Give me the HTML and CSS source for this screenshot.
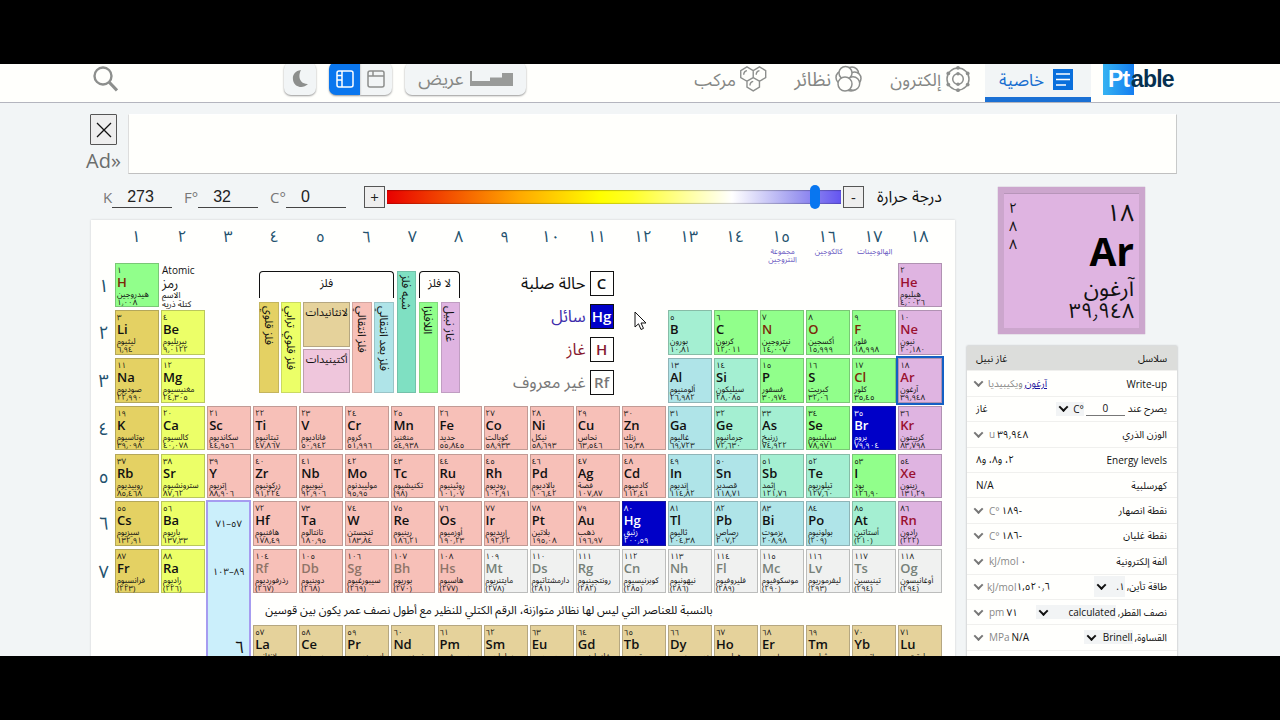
FILE: index.html
```html
<!DOCTYPE html>
<html lang="ar">
<head>
  <meta charset="UTF-8" />
  <meta name="viewport" content="width=device-width, initial-scale=1.0" />
  <title>Ptable</title>
  <link rel="stylesheet" href="styles.css">
</head>
<body>
  <div class="screen">
    <header class="topbar" dir="rtl">
      <div class="logo" dir="ltr"><b>Pt</b><span>able</span></div>
      <nav class="tabs">
        <a class="tab active">
          <svg width="22" height="22" viewBox="0 0 22 22"><rect x="1" y="0" width="20" height="21" fill="#0a6fdc"/><path d="M4 5h14M4 10.500h14M4 16h10" stroke="#fff" stroke-width="1.700"/></svg>
          <span>خاصية</span>
        </a>
        <a class="tab electrons">
          <svg width="26" height="28" viewBox="0 0 26 28" fill="none" stroke="#8d8f8d" stroke-width="1.500"><circle cx="13" cy="14" r="11"/><circle cx="13" cy="14" r="5.300"/><g fill="#8d8f8d" stroke="none"><circle cx="13" cy="2.800" r="1.900"/><circle cx="22.700" cy="8.400" r="1.900"/><circle cx="22.700" cy="19.600" r="1.900"/><circle cx="13" cy="25.200" r="1.900"/><circle cx="3.300" cy="19.600" r="1.900"/><circle cx="3.300" cy="8.400" r="1.900"/><circle cx="13" cy="8.700" r="1.800"/><circle cx="13" cy="19.300" r="1.800"/></g></svg>
          <span>إلكترون</span>
        </a>
        <a class="tab isotopes">
          <svg width="27" height="28" viewBox="0 0 27 28" fill="#fffffc" stroke="#8d8f8d" stroke-width="1.500"><circle cx="17" cy="8.500" r="6.500"/><circle cx="19.500" cy="13.500" r="6.500"/><circle cx="16" cy="19.500" r="6.500"/><circle cx="7.500" cy="12.500" r="6.500"/><circle cx="10.500" cy="8" r="6.500"/><circle cx="18" cy="18.500" r="6.700"/><circle cx="10" cy="19" r="7"/></svg>
          <span>نظائر</span>
        </a>
        <a class="tab compounds">
          <svg width="27" height="28" viewBox="0 0 29 28" fill="none" stroke="#8d8f8d" stroke-width="1.500"><path d="M7.500 1l6.700 3.900v7.600l-6.700 3.900-6.700-3.900V4.900zM20.900 1l6.700 3.900v7.600l-6.700 3.900-6.700-3.900V4.900zM14.200 12.500l6.700 3.900v6.400l-6.700 3.900-6.700-3.900v-6.400z"/><path d="M4 9.500c0-2.500 1-4 3.500-4.500M17.400 9.500c0-2.500 1-4 3.500-4.500M10.700 21c0-2.500 1-4 3.500-4.500"/></svg>
          <span>مركب</span>
        </a>
      </nav>
      <button class="tool wide"><svg width="43" height="15" viewBox="0 0 43 15"><path d="M0 0h2v10h18V6.500h12V2h11v13H0z" fill="#999b99"/></svg><span>عريض</span></button>
      <div class="layouts">
        <button class="tool"><svg width="18" height="18" viewBox="0 0 18 18" fill="none" stroke="#8d8f8d" stroke-width="1.500"><rect x="1" y="1" width="16" height="16" rx="2"/><path d="M1 6h16M6 1v5"/></svg></button>
        <button class="tool on"><svg width="18" height="18" viewBox="0 0 18 18" fill="none" stroke="#fff" stroke-width="1.500"><rect x="1" y="1" width="16" height="16" rx="2"/><path d="M6 1v16M1 5.500h5M1 10h5"/></svg></button>
      </div>
      <button class="tool moon"><svg width="17" height="18" viewBox="0 0 17 18"><path d="M9 0C2 1 0 6 1.200 11c1.500 6 9.500 8.500 14.800 3C9 14.500 5 8 9 0z" fill="#8d8f8d"/></svg></button>
      <svg class="search" width="25" height="26" viewBox="0 0 25 26" fill="none" stroke="#8d8f8d"><circle cx="10" cy="10" r="8.500" stroke-width="2.400"/><path d="M16 16l8 8.500" stroke-width="3.200"/></svg>
    </header>

    <section class="ad">
      <div class="ad-side">
        <button class="close"><svg width="16" height="16" viewBox="0 0 16 16"><path d="M1 1l14 14M15 1L1 15" stroke="#111" stroke-width="1.300"/></svg></button>
        <span>Ad»</span>
      </div>
      <div class="ad-box"></div>
    </section>

    <main class="content">
      <div class="left">
        <div class="temperature">
          <label class="unit kelvin">K <output>273</output></label>
          <label class="unit fahrenheit">F° <output>32</output></label>
          <label class="unit celsius">C° <output>0</output></label>
          <button class="step plus">+</button>
          <div class="slider"><i></i></div>
          <button class="step">-</button>
          <span class="temp-label">درجة حرارة</span>
        </div>

        <div class="table" id="table">
          <div class="key"><small>Atomic</small><b>رمز</b><span>الاسم</span><span>كتلة ذرية</span></div>

          <div class="series">
            <div class="bracket metals">فلز</div>
            <div class="bracket nonmetals">لا فلز</div>
            <div class="s alkali">فلز قلوي</div>
            <div class="s alkaline">فلز قلوي ترابي</div>
            <div class="inner">
              <div class="lanthanoid">لانثانيدات</div>
              <div class="actinoid">أكتينيدات</div>
            </div>
            <div class="s transition">فلز انتقالي</div>
            <div class="s post">فلز بعد انتقالي</div>
            <div class="s metalloid tall">شبه فلز</div>
            <div class="s nonmetal">اللافلزا</div>
            <div class="s noble">غاز نبيل</div>
          </div>

          <div class="states">
            <div><span>حالة صلبة</span><b>C</b></div>
            <div class="is-liquid"><span>سائل</span><b>Hg</b></div>
            <div class="is-gas"><span>غاز</span><b>H</b></div>
            <div class="is-unknown"><span>غير معروف</span><b>Rf</b></div>
          </div>

          <div class="inner-range"><span>٥٧–٧١</span><span>٨٩–١٠٣</span><em>٦</em></div>
          <p class="note" dir="rtl">بالنسبة للعناصر التي ليس لها نظائر متوازنة، الرقم الكتلي للنظير مع أطول نصف عمر يكون بين قوسين</p>
        </div>
      </div>

      <aside class="right" dir="rtl">
        <div class="card">
          <div class="card-main"><span>١٨</span><b>Ar</b><span class="card-name">آرغون</span><span class="card-mass">٣٩٫٩٤٨</span></div>
          <div class="shells"><span>٢</span><span>٨</span><span>٨</span></div>
        </div>
        <dl class="props">
          <div class="head"><dt>سلاسل</dt><dd>غاز نبيل</dd></div>
          <div><dt>Write-up</dt><dd class="more"><u>آرغون</u> <i>ويكيبيديا</i></dd></div>
          <div><dt>يصرح عند <output>0</output><span class="select"><bdo dir="ltr">C°</bdo></span></dt><dd>غاز</dd></div>
          <div><dt>الوزن الذري</dt><dd class="more" dir="ltr"><i>u</i> ٣٩٫٩٤٨</dd></div>
          <div><dt>Energy levels</dt><dd>٢، و٨، و٨</dd></div>
          <div><dt>كهرسلبية</dt><dd>N/A</dd></div>
          <div><dt>نقطة انصهار</dt><dd class="more" dir="ltr"><i>C°</i> <bdo dir="ltr">١٨٩-</bdo></dd></div>
          <div><dt>نقطة غليان</dt><dd class="more" dir="ltr"><i>C°</i> <bdo dir="ltr">١٨٦-</bdo></dd></div>
          <div><dt>ألفة إلكترونية</dt><dd class="more" dir="ltr"><i>kJ/mol</i> ٠</dd></div>
          <div><dt>طاقة تأين, <span class="select s-ion">١.</span></dt><dd class="more tight" dir="ltr"><i>kJ/mol</i> ١,٥٢٠٫٦</dd></div>
          <div><dt>نصف القطر, <span class="select s-radius">calculated</span></dt><dd class="more" dir="ltr"><i>pm</i> ٧١</dd></div>
          <div><dt>القساوة, <span class="select s-hard">Brinell</span></dt><dd class="more" dir="ltr"><i>MPa</i> N/A</dd></div>
        </dl>
      </aside>
    </main>

    <svg class="cursor" width="13" height="20" viewBox="0 0 13 20"><path d="M1 1v15l3.500-3.200L7 18.500l2.500-1.100L7 12h5z" fill="#fff" stroke="#111"/></svg>
  </div>
  <script src="script.js"></script>
</body>
</html>
```
FILE: styles.css
```css
* {
  box-sizing: border-box;
}
html, body {
  margin: 0;
  height: 100%;
  overflow: hidden;
  background: #000;
}
body {
  padding: 64px 0;
  color: #111;
  font-family: "Open Sans", "Noto Sans Arabic", "DejaVu Sans Condensed", "DejaVu Sans", sans-serif;
}
button {
  font-family: inherit;
  padding: 0;
  color: #222;
}
svg {
  flex: none;
  display: block;
}
.screen {
  position: relative;
  height: 592px;
  overflow: hidden;
  background: #f2f5f6;
}

/* top bar */
.topbar {
  display: flex;
  height: 39px;
  padding: 0 103px 0 93px;
  background: #fffffc;
  border-bottom: 1px solid #b4b5be;
}
.logo {
  display: flex;
  width: 74px;
  height: 31px;
  font: bold 23px/31px "Liberation Sans", sans-serif;
  letter-spacing: -.8px;
  color: #06304f;
}
.logo b {
  width: 31px;
  padding-left: 5px;
  color: #fff;
  background: linear-gradient(90deg, #36b3f2, #147df0);
}
.logo span {
  margin-left: -3px;
}
.tabs {
  display: flex;
  margin-right: 12px;
  width: 404px;
}
.tab {
  display: flex;
  gap: 4px;
  height: 38px;
  padding-right: 14px;
  color: #858785;
  font-size: 17.500px;
  line-height: 31px;
  white-space: nowrap;
}
.tab svg {
  margin-top: 1px;
}
.tab.active {
  width: 106px;
  padding-right: 17px;
  gap: 8px;
  font-size: 17px;
  color: #1a6fd0;
  background: #f2f5f6;
  border-bottom: 5px solid #1a70d4;
}
.tab.active svg {
  margin-top: 5px;
}
.electrons { width: 108px; }
.isotopes {
  width: 97px;
  padding-right: 15px;
  font-size: 19px;
}
.compounds { width: 93px; padding-right: 13px; }
.tool {
  display: flex;
  align-items: center;
  justify-content: center;
  height: 33px;
  margin-top: -2px;
  border: 0;
  background: #f2f5f6;
  border-radius: 7px;
  box-shadow: 0 1px 2px #999;
}
.wide {
  width: 121px;
  margin-right: 161px;
  gap: 6px;
  font-size: 18px;
  color: #858785;
}
.layouts {
  display: flex;
  margin-right: 13px;
}
.layouts .tool {
  width: 32px;
  border-radius: 0 7px 7px 0;
}
.layouts .on {
  width: 31px;
  background: #0a76ee;
  border-radius: 7px 0 0 7px;
}
.moon {
  width: 32px;
  margin-right: 13px;
}
.search {
  margin: 2px auto 0 0;
}

/* ad strip */
.ad {
  display: flex;
  height: 71px;
  padding: 11px 103px 0 86px;
}
.ad-side {
  width: 42px;
  font-size: 20px;
  line-height: 31px;
  color: #6b6d6d;
}
.close {
  display: flex;
  align-items: center;
  justify-content: center;
  width: 27px;
  height: 31px;
  margin-left: 4px;
  background: #eee;
  border: 1px solid #555;
  border-radius: 1px;
}
.ad-box {
  flex: 1;
  height: 60px;
  background: #fffffc;
  border: 1px solid #fff;
  border-color: #fff #c8caca #c0c0c0 #ddd;
}

.content {
  display: flex;
  padding-left: 91px;
}
.left {
  width: 864px;
}

/* temperature */
.temperature {
  display: flex;
  align-items: center;
  height: 46px;
  padding-left: 12px;
}
.unit {
  display: flex;
  justify-content: space-between;
  font-size: 15px;
  line-height: 22px;
  color: #777;
}
.kelvin { width: 69px; }
.fahrenheit {
  width: 74px;
  margin-left: 12px;
}
.celsius {
  width: 76px;
  margin-left: 12px;
}
.unit output {
  width: 60px;
  height: 22px;
  padding-left: 15px;
  font: 16px/22px "Liberation Sans", sans-serif;
  color: #222;
  border-bottom: 1px solid #444;
}
.step {
  width: 21px;
  height: 22px;
  font-size: 15px;
  line-height: 18px;
  background: #eee;
  border: 1px solid #555;
  border-radius: 0;
}
.plus {
  margin-left: 18px;
}
.slider {
  width: 454px;
  height: 14px;
  margin: 0 2px;
  display: flex;
  align-items: center;
  background: linear-gradient(90deg, #e80000, #ffa800 29%, #ffff00 47%, #ffff28 54%, #fff 76%, #a09cf0 90%, #6455f0);
  box-shadow: inset 0 1px 1px rgba(0, 0, 0, .25), inset 0 -1px 1px rgba(0, 0, 0, .2);
}
.slider i {
  width: 10px;
  height: 24px;
  margin-left: 423px;
  background: #0876f0;
  border-radius: 5px;
}
.temp-label {
  margin-left: auto;
  margin-right: 13px;
  font-size: 16px;
  white-space: nowrap;
}

/* periodic table */
.table {
  display: grid;
  grid-template-columns: 21.900px repeat(18, 44px);
  grid-template-rows: 39.600px repeat(7, 44.500px) 25.100px 44.500px;
  gap: 3.200px 2.080px;
  height: 450px;
  background: #fffffd;
  box-shadow: 0 0 2px #ccc;
}
.group {
  grid-row: 1;
  margin-left: -2px;
  padding-top: 5px;
  text-align: center;
  font-size: 16px;
  line-height: 23px;
  color: #23516d;
}
.group small {
  display: block;
  margin: -1px -4px 0 -1px;
  font-size: 7.600px;
  line-height: 8px;
  color: #6353c0;
}
.period {
  grid-column: 1;
  padding-right: 4px;
  text-align: right;
  font-size: 18px;
  line-height: 44px;
  color: #23516d;
}
.el {
  display: flex;
  flex-direction: column;
  padding-left: 1px;
  border: 1px solid rgba(70, 70, 70, .3);
  white-space: nowrap;
  font-size: 8px;
  line-height: 11px;
}
.el b {
  font-size: 13px;
  font-weight: 600;
  line-height: 15px;
}
.el span {
  font-size: 8px;
  line-height: 8px;
}
.el .mass {
  font-size: 8px;
  line-height: 8px;
}
.alkali { background: #e4d163; }
.alkaline { background: #ecff68; }
.transition { background: #f7c0b8; }
.post { background: #afe4e8; }
.metalloid { background: #a4efd2; }
.nonmetal { background: #91ff8b; }
.noble { background: #dfb4e1; }
.unknown { background: #f0f1f0; }
.lanthanoid { background: #e5d29b; }
.actinoid { background: #efc6dc; }
.gas b { color: #9a1030; }
.nonmetal.gas b { color: #7c2a08; }
.synthetic b { color: #8f7468; }
.unknown b { color: #768078; }
.liquid {
  color: #fff;
  background: #0000c8;
}
.selected {
  outline: 2px solid #145fc4;
}

.key {
  grid-area: 2 / 3;
  display: flex;
  flex-direction: column;
  align-items: flex-start;
  padding: 1px 0 0 1px;
  font-size: 8.500px;
  line-height: 9px;
  white-space: nowrap;
}
.key small {
  font-size: 10px;
  line-height: 12px;
}
.key b {
  font-size: 13px;
  font-weight: normal;
  line-height: 14px;
}

/* legend */
.series {
  grid-area: 2 / 5 / 5 / 10;
  display: grid;
  grid-template-columns: 19.600px 19.600px 46.500px 19.600px 19.600px 19.600px 19.600px 19.600px;
  grid-template-rows: 29px 91px;
  gap: 2.500px;
  padding: 8px 0 0 6px;
  font-size: 11.500px;
  white-space: nowrap;
}
.bracket {
  margin-bottom: 2px;
  border: 1px solid #111;
  border-bottom: 0;
  border-radius: 4px 4px 0 0;
  text-align: center;
  line-height: 21px;
}
.metals { grid-column: 1 / 6; }
.nonmetals { grid-column: 7 / 9; }
.s {
  grid-row: 2;
  writing-mode: vertical-rl;
  padding-top: 3px;
  line-height: 18px;
  border: 1px solid rgba(70, 70, 70, .2);
}
.s.tall {
  grid-row: 1 / 3;
  background: #7fe0c2;
}
.inner {
  grid-row: 2;
  display: grid;
  gap: 2px;
  text-align: center;
  font-size: 10.800px;
  line-height: 18px;
}
.inner div {
  border: 1px solid rgba(70, 70, 70, .3);
}
.states {
  grid-area: 2 / 10 / 5 / 13;
  width: 130px;
  display: flex;
  flex-direction: column;
  gap: 8px;
  padding-top: 8px;
  font-size: 16.500px;
  white-space: nowrap;
}
.states div {
  display: flex;
  justify-content: flex-end;
  align-items: center;
  gap: 4px;
  height: 25px;
}
.states b {
  width: 24px;
  height: 25px;
  border: 1.500px solid #111;
  text-align: center;
  font-size: 15px;
  font-weight: 600;
  line-height: 22px;
}
.is-liquid { color: #3d2cab; }
.is-liquid b {
  color: #fff;
  background: #0000c8;
}
.is-gas { color: #86182f; }
.is-unknown { color: #777; }
.inner-range {
  grid-area: 7 / 4 / 11 / 5;
  display: flex;
  flex-direction: column;
  margin: -1px 0 0 -1px;
  background: #cbeffb;
  border: 2px solid #a69cf0;
  font-size: 9.500px;
  text-align: center;
}
.inner-range span {
  height: 47.700px;
  line-height: 44px;
  unicode-bidi: isolate;
  direction: rtl;
}
.inner-range em {
  margin: 34px 5px 0;
  text-align: right;
  font-style: normal;
  font-size: 17px;
  line-height: 30px;
}
.note {
  grid-area: 9 / 5 / 10 / 16;
  margin: 0;
  padding-left: 12px;
  justify-self: start;
  font-size: 11.400px;
  line-height: 25px;
  white-space: nowrap;
}

/* selected element */
.right {
  width: 210px;
  margin-left: 12px;
  padding-top: 13px;
}
.card {
  display: flex;
  justify-content: space-between;
  width: 147px;
  height: 147px;
  margin: 0 32px 0 0;
  padding: 7px 5px;
  border: 6px solid #cca6cd;
  background: #dfb4e1;
  box-shadow: inset 0 1px 0 #b795b9, 0 0 1px #a98aaa;
}
.card-main {
  display: flex;
  flex-direction: column;
  align-items: flex-start;
  font-size: 24px;
  line-height: 24px;
}
.card-main b {
  margin: 7px 0 4px;
  font-size: 39px;
  line-height: 40px;
  color: #000;
}
.card-name {
  font-size: 22.500px;
  line-height: 25px;
}
.card-mass { font-size: 21px; line-height: 20px; }
.shells {
  display: flex;
  flex-direction: column;
  font-size: 14px;
  line-height: 18px;
  margin-top: -1px;
}
.props {
  margin: 12px 0 0;
  padding-bottom: 20px;
  background: #fffffd;
  box-shadow: 0 0 2px #aaa;
  font-size: 10px;
  white-space: nowrap;
}
.props > div {
  display: flex;
  justify-content: space-between;
  align-items: center;
  height: 25.400px;
  padding: 0 10px 0 9px;
  border-bottom: 1px solid #f0f0ee;
}
.props .head {
  background: #dcdddb;
}
.props dt {
  display: flex;
  align-items: center;
  gap: 2px;
}
.props dd {
  margin: 0;
}
.props i {
  font-style: normal;
  color: #888;
}
.props u {
  color: #1a0f9c;
}
.props output {
  width: 39px;
  margin-right: 1px;
  text-align: center;
  border-bottom: 1px solid #777;
}
.more {
  display: flex;
  align-items: center;
  gap: 2px;
}
.more.tight { gap: 0; }
.more::after, .select::after {
  content: "";
  width: 5px;
  height: 5px;
  border: solid #777;
  border-width: 0 2px 2px 0;
  transform: rotate(45deg) translate(-1px, -1px);
}
.more::after {
  margin: 0 4px 0 -1px;
}
.more[dir="ltr"]::after {
  order: -1;
  margin: 0 5px 0 -1px;
}
.select {
  display: flex;
  align-items: center;
  justify-content: space-between;
  width: 28px;
  padding-left: 4px;
  background: #f2f4f5;
}
.select::after {
  border-color: #111;
}
.s-ion { width: 31px; }
.s-radius { width: 80px; }
.s-hard { width: 49px; }

.cursor {
  position: absolute;
  left: 634px;
  top: 247px;
}
```
FILE: script.js
```js
// number, symbol, name, mass, column, row, series, state
const elements = `
1 H هيدروجين 1.008 1 1 nonmetal gas
2 He هيليوم 4.0026 18 1 noble gas
3 Li ليثيوم 6.94 1 2 alkali
4 Be بيريليوم 9.0122 2 2 alkaline
5 B بورون 10.81 13 2 metalloid
6 C كربون 12.011 14 2 nonmetal
7 N نيتروجين 14.007 15 2 nonmetal gas
8 O أكسجين 15.999 16 2 nonmetal gas
9 F فلور 18.998 17 2 nonmetal gas
10 Ne نيون 20.180 18 2 noble gas
11 Na صوديوم 22.990 1 3 alkali
12 Mg مغنيسيوم 24.305 2 3 alkaline
13 Al ألومنيوم 26.982 13 3 post
14 Si سيليكون 28.085 14 3 metalloid
15 P فسفور 30.974 15 3 nonmetal
16 S كبريت 32.06 16 3 nonmetal
17 Cl كلور 35.45 17 3 nonmetal gas
18 Ar آرغون 39.948 18 3 noble gas selected
19 K بوتاسيوم 39.098 1 4 alkali
20 Ca كالسيوم 40.078 2 4 alkaline
21 Sc سكانديوم 44.956 3 4 transition
22 Ti تيتانيوم 47.867 4 4 transition
23 V فاناديوم 50.942 5 4 transition
24 Cr كروم 51.996 6 4 transition
25 Mn منغنيز 54.938 7 4 transition
26 Fe حديد 55.845 8 4 transition
27 Co كوبالت 58.933 9 4 transition
28 Ni نيكل 58.693 10 4 transition
29 Cu نحاس 63.546 11 4 transition
30 Zn زنك 65.38 12 4 transition
31 Ga غاليوم 69.723 13 4 post
32 Ge جرمانيوم 72.630 14 4 metalloid
33 As زرنيخ 74.922 15 4 metalloid
34 Se سيلينيوم 78.971 16 4 nonmetal
35 Br بروم 79.904 17 4 nonmetal liquid
36 Kr كريبتون 83.798 18 4 noble gas
37 Rb روبيديوم 85.468 1 5 alkali
38 Sr سترونشيوم 87.62 2 5 alkaline
39 Y إتريوم 88.906 3 5 transition
40 Zr زركونيوم 91.224 4 5 transition
41 Nb نيوبيوم 92.906 5 5 transition
42 Mo موليبدنوم 95.95 6 5 transition
43 Tc تكنيشيوم (98) 7 5 transition
44 Ru روثينيوم 101.07 8 5 transition
45 Rh روديوم 102.91 9 5 transition
46 Pd بالاديوم 106.42 10 5 transition
47 Ag فضة 107.87 11 5 transition
48 Cd كادميوم 112.41 12 5 transition
49 In إنديوم 114.82 13 5 post
50 Sn قصدير 118.71 14 5 post
51 Sb إثمد 121.76 15 5 metalloid
52 Te تيلوريوم 127.60 16 5 metalloid
53 I يود 126.90 17 5 nonmetal
54 Xe زينون 131.29 18 5 noble gas
55 Cs سيزيوم 132.91 1 6 alkali
56 Ba باريوم 137.33 2 6 alkaline
72 Hf هافنيوم 178.49 4 6 transition
73 Ta تانتالوم 180.95 5 6 transition
74 W تنجستن 183.84 6 6 transition
75 Re رينيوم 186.21 7 6 transition
76 Os أوزميوم 190.23 8 6 transition
77 Ir إريديوم 192.22 9 6 transition
78 Pt بلاتين 195.08 10 6 transition
79 Au ذهب 196.97 11 6 transition
80 Hg زئبق 200.59 12 6 transition liquid
81 Tl ثاليوم 204.38 13 6 post
82 Pb رصاص 207.2 14 6 post
83 Bi بزموت 208.98 15 6 post
84 Po بولونيوم (209) 16 6 post
85 At أستاتين (210) 17 6 metalloid
86 Rn رادون (222) 18 6 noble gas
87 Fr فرانسيوم (223) 1 7 alkali
88 Ra راديوم (226) 2 7 alkaline
104 Rf رذرفورديوم (267) 4 7 transition synthetic
105 Db دوبنيوم (268) 5 7 transition synthetic
106 Sg سيبورغيوم (269) 6 7 transition synthetic
107 Bh بوريوم (270) 7 7 transition synthetic
108 Hs هاسيوم (277) 8 7 transition synthetic
109 Mt مايتنريوم (278) 9 7 unknown
110 Ds دارمشتاتيوم (281) 10 7 unknown
111 Rg رونتجينيوم (282) 11 7 unknown
112 Cn كوبرنيسيوم (285) 12 7 unknown
113 Nh نيهونيوم (286) 13 7 unknown
114 Fl فليروفيوم (289) 14 7 unknown
115 Mc موسكوفيوم (290) 15 7 unknown
116 Lv ليفرموريوم (293) 16 7 unknown
117 Ts تينيسين (294) 17 7 unknown
118 Og أوغانيسون (294) 18 7 unknown
57 La لانثانوم 138.91 4 9 lanthanoid
58 Ce سيريوم 140.12 5 9 lanthanoid
59 Pr براسيوديميوم 140.91 6 9 lanthanoid
60 Nd نيوديميوم 144.24 7 9 lanthanoid
61 Pm بروميثيوم (145) 8 9 lanthanoid
62 Sm ساماريوم 150.36 9 9 lanthanoid
63 Eu يوروبيوم 151.96 10 9 lanthanoid
64 Gd غادولينيوم 157.25 11 9 lanthanoid
65 Tb تربيوم 158.93 12 9 lanthanoid
66 Dy ديسبروسيوم 162.50 13 9 lanthanoid
67 Ho هولميوم 164.93 14 9 lanthanoid
68 Er إربيوم 167.26 15 9 lanthanoid
69 Tm ثوليوم 168.93 16 9 lanthanoid
70 Yb إتربيوم 173.05 17 9 lanthanoid
71 Lu لوتيتيوم 174.97 18 9 lanthanoid`;

const groupNames = { 15: "مجموعة<br>النتروجين", 16: "كالكوجين", 17: "الهالوجينات" };
const table = document.getElementById("table");

function arabic(value) {
  return String(value).replace(/\d/g, d => "٠١٢٣٤٥٦٧٨٩"[d]).replace(".", "٫");
}

function add(className, html, column, row) {
  const div = document.createElement("div");
  div.className = className;
  div.innerHTML = html;
  div.style.gridColumn = column;
  div.style.gridRow = row;
  table.appendChild(div);
}

for (let i = 1; i <= 18; i++) {
  const name = groupNames[i] ? `<small>${groupNames[i]}</small>` : "";
  add("group", arabic(i) + name, i + 1, 1);
}
for (let i = 1; i <= 7; i++) {
  add("period", arabic(i), 1, i + 1);
}
elements.trim().split("\n").forEach(line => {
  const [number, symbol, name, mass, column, row, ...types] = line.split(" ");
  add("el " + types.join(" "),
    `${arabic(number)}<b>${symbol}</b><span>${name}</span><span class="mass">${arabic(mass)}</span>`,
    Number(column) + 1, Number(row) + 1);
});
```
